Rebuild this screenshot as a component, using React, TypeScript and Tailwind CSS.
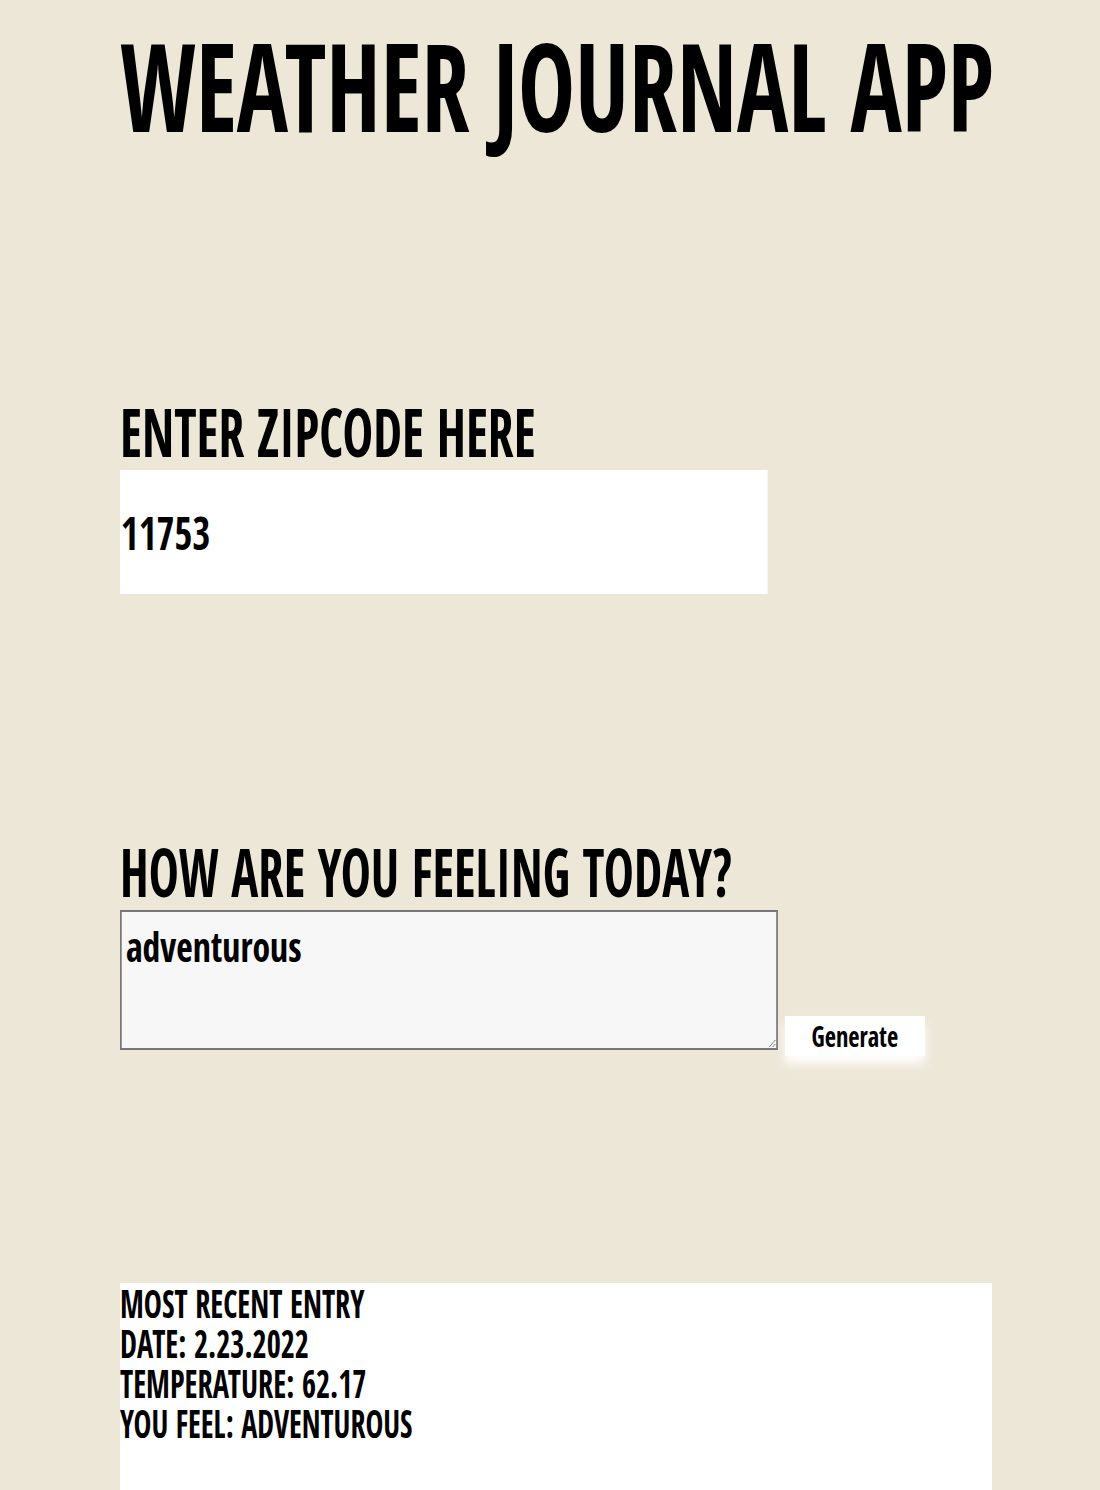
export default function App() {
  return (
    <div className="min-h-screen bg-[#ede7d8] text-black font-['Open_Sans_Condensed','Open_Sans',sans-serif] font-bold">
      <div className="pl-[120px] w-[992px]">
        <h1 className="pt-[23px] text-[123px] leading-none whitespace-nowrap">
          <span className="inline-block mr-[-260px] origin-left scale-x-[0.78]">WEATHER JOURNAL APP</span>
        </h1>

        <section className="mt-[252px]">
          <label htmlFor="zip" className="block text-[67px] leading-none whitespace-nowrap">
            <span className="inline-block origin-left scale-x-[0.77]">ENTER ZIPCODE HERE</span>
          </label>
          <input
            id="zip"
            type="text"
            defaultValue="11753"
            className="mt-[5px] block w-[771px] h-[124px] origin-left scale-x-[0.84] bg-white pl-[1px] text-[46px] text-black outline-none border-0"
          />
        </section>

        <section className="mt-[244px]">
          <label htmlFor="feelings" className="block text-[67px] leading-none whitespace-nowrap">
            <span className="inline-block origin-left scale-x-[0.755]">HOW ARE YOU FEELING TODAY?</span>
          </label>
          <div className="mt-[5px] flex items-start">
            <textarea
              id="feelings"
              defaultValue="adventurous"
              className="w-[774px] h-[140px] mr-[-116px] origin-left scale-x-[0.85] border-y-2 border-x-[2.35px] border-[#767676] bg-[#f7f7f7] pl-[5px] pr-[4px] pt-[8px] pb-0 text-[42px] leading-tight text-black outline-none"
            />
            <button
              type="button"
              className="ml-[7px] mt-[106px] w-[140px] h-[40px] bg-white shadow-[0_8px_10px_rgba(255,255,255,0.95)] text-[28px] leading-none flex items-center justify-center"
            >
              <span className="inline-block scale-x-[0.87]">Generate</span>
            </button>
          </div>
        </section>

        <div className="mt-[227px] w-[872px] h-[220px] bg-white text-[40px] leading-[40px]">
          <div className="whitespace-nowrap"><span className="inline-block origin-left scale-x-[0.76]">MOST RECENT ENTRY</span></div>
          <div className="whitespace-nowrap"><span className="inline-block origin-left scale-x-[0.76]">DATE: 2.23.2022</span></div>
          <div className="whitespace-nowrap"><span className="inline-block origin-left scale-x-[0.76]">TEMPERATURE: 62.17</span></div>
          <div className="whitespace-nowrap"><span className="inline-block origin-left scale-x-[0.75]">YOU FEEL: ADVENTUROUS</span></div>
        </div>
      </div>
    </div>
  );
}
